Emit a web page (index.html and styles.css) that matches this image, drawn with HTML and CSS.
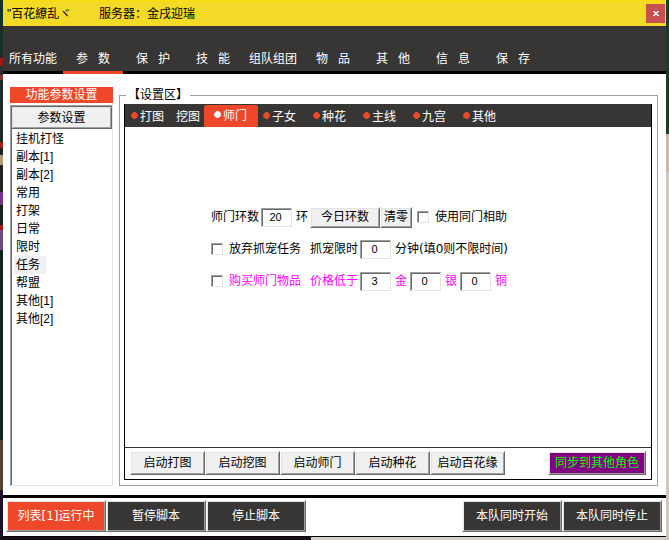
FILE: index.html
```html
<!DOCTYPE html>
<html lang="zh-CN">
  <head>
    <meta charset="UTF-8" />
    <title>百花繚乱</title>
    <link rel="stylesheet" href="styles.css" />
  </head>
  <body>
    <div class="window">
      <header class="title-bar">
        <span class="role">"百花繚乱ヾ</span>
        <span class="server">服务器：金戌迎瑞</span>
        <button class="close" type="button" aria-label="关闭">
          <svg width="6" height="5" viewBox="0 0 6 5" aria-hidden="true">
            <path d="M0 0h2v1h2V0h2v1H5v1H4v1h1v1h1v1H4V4H2v1H0V4h1V3h1V2H1V1H0z" fill="#fff" />
          </svg>
        </button>
      </header>

      <nav class="main-nav">
        <a href="#">所有功能</a>
        <a href="#" class="active">参&nbsp;&nbsp;&nbsp;数</a>
        <a href="#">保&nbsp;&nbsp;&nbsp;护</a>
        <a href="#">技&nbsp;&nbsp;&nbsp;能</a>
        <a href="#">组队组团</a>
        <a href="#">物&nbsp;&nbsp;&nbsp;品</a>
        <a href="#">其&nbsp;&nbsp;&nbsp;他</a>
        <a href="#">信&nbsp;&nbsp;&nbsp;息</a>
        <a href="#">保&nbsp;&nbsp;&nbsp;存</a>
      </nav>

      <main class="content">
        <aside class="sidebar">
          <h2>功能参数设置</h2>
          <div class="list-box">
            <button class="btn" type="button">参数设置</button>
            <ul>
              <li><a href="#">挂机打怪</a></li>
              <li><a href="#">副本[1]</a></li>
              <li><a href="#">副本[2]</a></li>
              <li><a href="#">常用</a></li>
              <li><a href="#">打架</a></li>
              <li><a href="#">日常</a></li>
              <li><a href="#">限时</a></li>
              <li><a href="#" class="selected">任务</a></li>
              <li><a href="#">帮盟</a></li>
              <li><a href="#">其他[1]</a></li>
              <li><a href="#">其他[2]</a></li>
            </ul>
          </div>
        </aside>

        <fieldset class="settings">
          <legend>【设置区】</legend>
          <div class="panel">
            <div class="tabs">
              <button class="tab dot" type="button">打图</button>
              <button class="tab" type="button">挖图</button>
              <button class="tab dot active" type="button">师门</button>
              <button class="tab dot" type="button">子女</button>
              <button class="tab dot" type="button">种花</button>
              <button class="tab dot" type="button">主线</button>
              <button class="tab dot" type="button">九宫</button>
              <button class="tab dot" type="button">其他</button>
            </div>

            <form class="form">
              <div class="row">
                <label for="rounds">师门环数</label>
                <input id="rounds" type="text" value="20" />
                <span class="unit">环</span>
                <div class="buttons">
                  <button class="btn today" type="button">今日环数</button>
                  <button class="btn clear" type="button">清零</button>
                </div>
                <label class="check help"><input type="checkbox" />使用同门相助</label>
              </div>
              <div class="row">
                <label class="check"><input type="checkbox" />放弃抓宠任务</label>
                <label class="limit" for="minutes">抓宠限时</label>
                <input id="minutes" type="text" value="0" />
                <span class="unit">分钟(填0则不限时间)</span>
              </div>
              <div class="row price">
                <label class="check"><input type="checkbox" />购买师门物品</label>
                <label class="limit" for="gold">价格低于</label>
                <input id="gold" type="text" value="3" />
                <label class="unit" for="gold">金</label>
                <input id="silver" type="text" value="0" />
                <label class="unit" for="silver">银</label>
                <input id="copper" type="text" value="0" />
                <label class="unit" for="copper">铜</label>
              </div>
            </form>

            <div class="actions">
              <button class="btn" type="button">启动打图</button>
              <button class="btn" type="button">启动挖图</button>
              <button class="btn" type="button">启动师门</button>
              <button class="btn" type="button">启动种花</button>
              <button class="btn" type="button">启动百花缘</button>
              <button class="btn sync" type="button">同步到其他角色</button>
            </div>
          </div>
        </fieldset>
      </main>

      <footer class="footer">
        <button class="btn dark running" type="button">列表[1]运行中</button>
        <button class="btn dark" type="button">暂停脚本</button>
        <button class="btn dark" type="button">停止脚本</button>
        <button class="btn dark team" type="button">本队同时开始</button>
        <button class="btn dark" type="button">本队同时停止</button>
      </footer>
    </div>
  </body>
</html>
```
FILE: styles.css
```css
* {
  box-sizing: border-box;
}

body {
  margin: 0;
  padding: 0 3px 3px;
  font-family: "Liberation Sans", "Noto Sans CJK SC", sans-serif;
  font-size: 12px;
  line-height: 18px;
  color: #000;
  /* game screen behind the window */
  background:
    linear-gradient(#1d3a26 0 134px, #cbb9a8 134px 172px, #cdc7c2 172px) right / 3px 100% no-repeat,
    linear-gradient(90deg, #1b0e18 0 311px, #d8cfc4 311px) bottom / 100% 3px no-repeat,
    linear-gradient(#16302c 0 58px, #a01818 58px 66px, #27302e 66px 75px, #8c3038 75px 80px,
      #1c2a28 80px 142px, #a81c1c 142px 148px, #1c2623 148px 155px, #b09a70 155px 165px,
      #26221f 165px 192px, #7a2f88 192px 205px, #15201c 205px 225px, #a01818 225px 230px,
      #6a4a80 230px 250px, #122420 250px 440px, #5a4030 440px 490px, #20102a 490px) left / 3px 100% no-repeat;
}

button,
input {
  font: inherit;
  color: inherit;
}

a {
  color: inherit;
  text-decoration: none;
}

.window {
  display: flex;
  flex-direction: column;
  min-height: calc(100vh - 3px);
  background: #fff;
}

/* title bar */
.title-bar {
  display: flex;
  align-items: center;
  height: 26px;
  padding: 0 1px 0 4px;
  background: #f3da26;
  border-top: 1px solid #fcdc04;
}

.role {
  width: 92px;
}

.close {
  display: flex;
  align-items: center;
  justify-content: center;
  width: 19px;
  height: 19px;
  margin-left: auto;
  padding: 0;
  border: none;
  background: #c75050;
}

/* top navigation */
.main-nav {
  display: flex;
  height: 48px;
  padding-top: 24px;
  color: #fff;
  background: linear-gradient(#383634 0 45px, #000 45px);
}

.main-nav a {
  width: 60px;
  text-align: center;
  white-space: nowrap;
}

.main-nav .active {
  border-bottom: 3px solid #ee4729;
}

.content {
  display: flex;
  flex: 1;
  gap: 6px;
  padding: 13px 8px 9px 7px;
}

/* raised buttons */
.btn {
  padding: 0;
  border: 1px solid;
  border-color: #fff #696969 #696969 #fff;
  background: #f0f0f0;
  box-shadow: inset 1px 1px #e3e3e3, inset -1px -1px #a0a0a0;
  white-space: nowrap;
}

/* sidebar */
.sidebar {
  display: flex;
  flex-direction: column;
  gap: 2px;
  width: 103px;
}

.sidebar h2 {
  margin: 0;
  font-size: 12px;
  font-weight: normal;
  line-height: 16px;
  text-align: center;
  color: #fff;
  background: #ee4729;
}

.list-box {
  flex: 1;
  border: 1px solid;
  border-color: #a0a0a0 #e3e3e3 #e3e3e3 #a0a0a0;
  box-shadow: inset 1px 1px #696969;
}

.list-box .btn {
  width: 100%;
  height: 23px;
  border-color: #696969;
}

.list-box ul {
  margin: 1px 0 0 3px;
  padding: 0;
  list-style: none;
}

.list-box li a {
  display: inline-block;
  padding: 0 6px 0 2px;
  vertical-align: top;
}

.list-box .selected {
  background: #f0f0f0;
}

/* settings area */
.settings {
  display: flex;
  flex: 1;
  min-width: 0;
  margin: 0;
  padding: 1px 5px 5px 4px;
  border: 1px solid #a0a0a0;
  font-family: "DejaVu Sans", "Noto Sans CJK SC", sans-serif;
}

.settings legend {
  margin-left: 2px;
  padding: 0 2px;
  line-height: 16px;
}

.panel {
  display: flex;
  flex: 1;
  flex-direction: column;
  border: 1px solid #000;
  border-top: none;
}

.tabs {
  display: flex;
  height: 23px;
  padding: 1px 0 0 1px;
  color: #fff;
  background: #383634;
}

.tab {
  display: flex;
  align-items: center;
  gap: 2px;
  padding: 2px 4px 0 0;
  border: none;
  background: none;
  white-space: nowrap;
}

.tab.dot {
  padding: 2px 12px 0 5px;
}

.tab.dot::before {
  content: "";
  width: 7px;
  height: 7px;
  margin-bottom: 3px;
  clip-path: polygon(35% 0, 65% 0, 100% 35%, 100% 65%, 65% 100%, 35% 100%, 0 65%, 0 35%);
  background: #ee4729;
}

.tab.dot.active {
  padding: 0 11px 0 10px;
  border-radius: 2px 2px 0 0;
  background: #ee4729;
}

.tab.dot.active::before {
  background: #fff;
}

.form {
  flex: 1;
  padding: 79px 0 0 86px;
}

.row {
  display: flex;
  align-items: center;
  height: 22px;
  margin-bottom: 10px;
  white-space: nowrap;
}

.row input[type="text"] {
  width: 31px;
  height: 19px;
  margin-left: 2px;
  padding: 0 2px 0 0;
  border: 1px solid;
  border-color: #a0a0a0 #e3e3e3 #e3e3e3 #a0a0a0;
  border-radius: 0;
  box-shadow: inset 1px 1px #696969;
  font-family: "Liberation Sans", sans-serif;
  font-size: 11px;
  text-align: center;
}

.unit {
  margin-left: 4px;
}

.row .unit + input[type="text"] {
  margin-left: 3px;
}

.buttons {
  display: flex;
  margin-left: 2px;
}

.buttons .btn {
  height: 21px;
}

.today {
  width: 70px;
}

.clear {
  width: 32px;
}

.check {
  display: flex;
  align-items: center;
  gap: 6px;
}

.check input {
  appearance: none;
  width: 12px;
  height: 12px;
  margin: 0;
  border: 1px solid;
  border-color: #a0a0a0 #e3e3e3 #e3e3e3 #a0a0a0;
  box-shadow: inset 1px 1px #696969;
}

.check input:checked {
  background: #383634;
}

.help {
  margin-left: 5px;
}

.limit {
  margin-left: 9px;
}

.price {
  color: #f0f;
}

.price input {
  color: #000;
}

.actions {
  display: flex;
  padding: 3px 5px 4px;
  border-top: 1px solid #383634;
}

.actions .btn {
  width: 75px;
  height: 24px;
}

.actions .sync {
  width: 98px;
  margin-left: auto;
  color: #0f0;
  background: #800080;
}

/* bottom bar */
.footer {
  display: flex;
  padding: 2px 4px 4px 3px;
  border-top: 3px solid #000;
  border-bottom: 1px solid #000;
  font-family: "DejaVu Sans", "Noto Sans CJK SC", sans-serif;
}

.footer .btn {
  width: 100px;
  height: 32px;
}

.dark {
  color: #fff;
  background: #383634;
}

.running {
  background: #ee4729;
}

.team {
  margin-left: auto;
}
```
